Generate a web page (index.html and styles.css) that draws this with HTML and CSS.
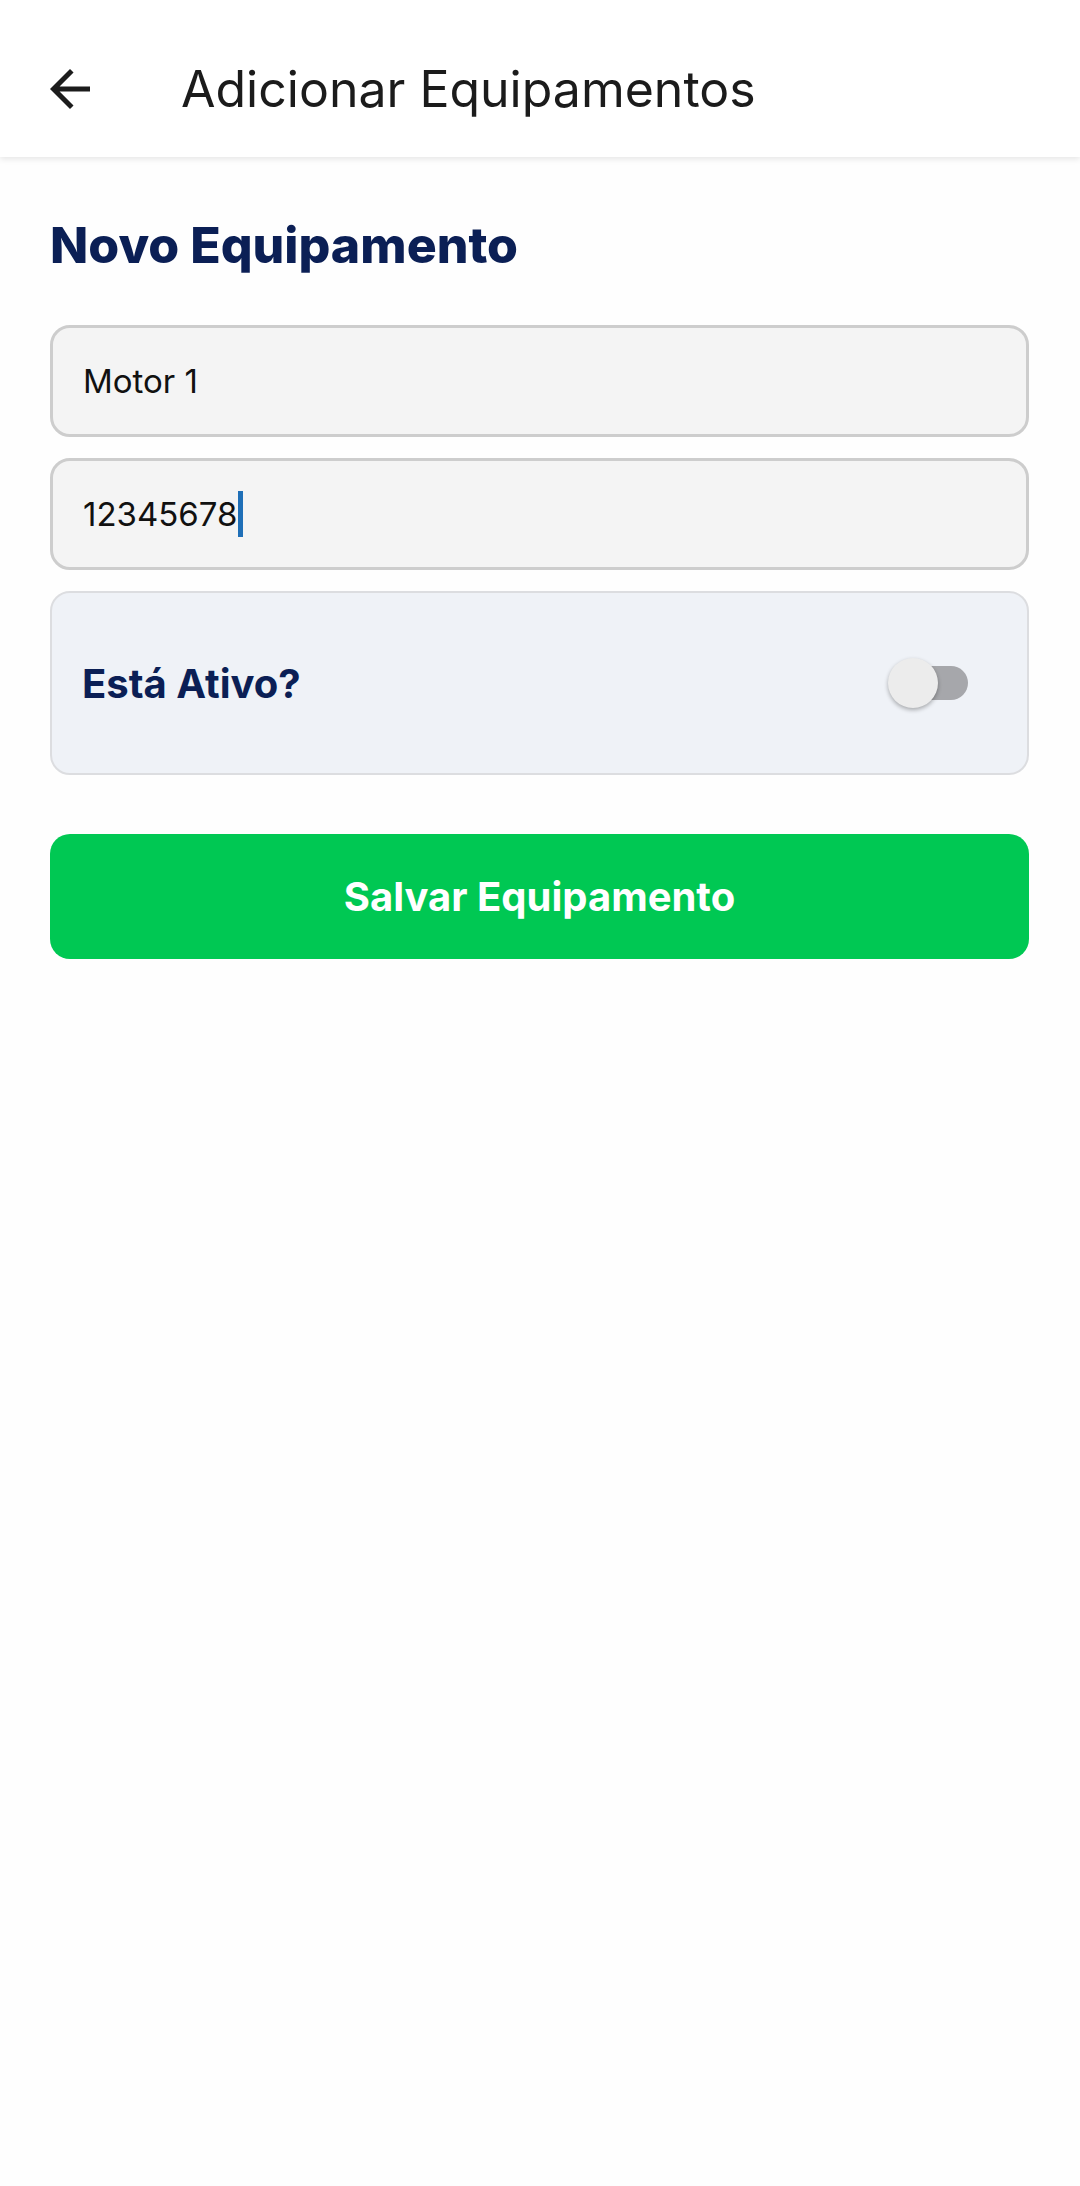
FILE: index.html
```html
<!DOCTYPE html>
<html lang="pt">
<head>
<meta charset="utf-8">
<title>Adicionar Equipamentos</title>
<link rel="stylesheet" href="styles.css">
</head>
<body>
<header class="appbar">
  <button class="back" aria-label="Voltar">
    <svg viewBox="0 0 24 24" width="60" height="60"><path d="M20 11H7.83l5.59-5.59L12 4l-8 8 8 8 1.41-1.41L7.83 13H20v-2z" fill="#1c1c1c"/></svg>
  </button>
  <h1 class="appbar-title">Adicionar Equipamentos</h1>
</header>
<main class="content">
  <h2 class="section-title">Novo Equipamento</h2>
  <div class="field"><span class="field-text">Motor 1</span></div>
  <div class="field"><span class="field-text">12345678</span><span class="cursor"></span></div>
  <div class="toggle-card">
    <span class="toggle-label">Está Ativo?</span>
    <span class="switch"><span class="track"></span><span class="thumb"></span></span>
  </div>
  <button class="save">Salvar Equipamento</button>
</main>
</body>
</html>
```
FILE: styles.css
```css
* { box-sizing: border-box; }
html, body { margin: 0; padding: 0; background: #fefefe; }
body { font-family: "Inter", "Open Sans", sans-serif; width: 1080px; min-height: 2186px; }

.appbar {
  height: 157px;
  padding-top: 20px;
  background: #ffffff;
  display: flex;
  align-items: center;
  box-shadow: 0 2px 6px rgba(0,0,0,0.10);
  position: relative;
}
.back {
  border: 0; background: none; padding: 0;
  margin-left: 40px;
  width: 60px; height: 60px;
  display: flex; align-items: center; justify-content: center;
}
.appbar-title {
  margin: 0 0 0 81px;
  font-size: 50px;
  font-weight: 400;
  color: #1b1b1b;
}

.content { padding: 0 51px 0 50px; display: flex; flex-direction: column; }
.section-title {
  margin: 58px 0 50px 0;
  font-size: 50px;
  line-height: 60px;
  font-weight: 800;
  color: #0b1f55;
}
.field {
  height: 112px;
  background: #f4f4f4;
  border: 3px solid #cdcdcd;
  border-radius: 20px;
  margin-bottom: 21px;
  display: flex;
  align-items: center;
  padding-left: 30px;
}
.field-text { font-size: 33px; color: #111; }
.cursor { width: 5px; height: 46px; background: #1f6fb7; margin-left: 1px; }

.toggle-card {
  height: 184px;
  background: #eff2f7;
  border: 2px solid #dcdde0;
  border-radius: 20px;
  display: flex;
  align-items: center;
  justify-content: space-between;
  padding: 0 59px 0 30px;
}
.toggle-label { font-size: 40px; font-weight: 700; color: #0b1f55; }
.switch { position: relative; width: 80px; height: 50px; display: block; }
.track {
  position: absolute; right: 0; top: 8px;
  width: 70px; height: 34px; border-radius: 17px; background: #a6a7ab;
}
.thumb {
  position: absolute; left: 0; top: 0;
  width: 50px; height: 50px; border-radius: 50%;
  background: #ececec;
  box-shadow: 0 2px 4px rgba(0,0,0,0.3);
}

.save {
  margin-top: 59px;
  height: 125px;
  border: 0;
  border-radius: 20px;
  background: #00c853;
  color: #ffffff;
  font-family: inherit;
  font-size: 40px;
  font-weight: 700;
}
```
